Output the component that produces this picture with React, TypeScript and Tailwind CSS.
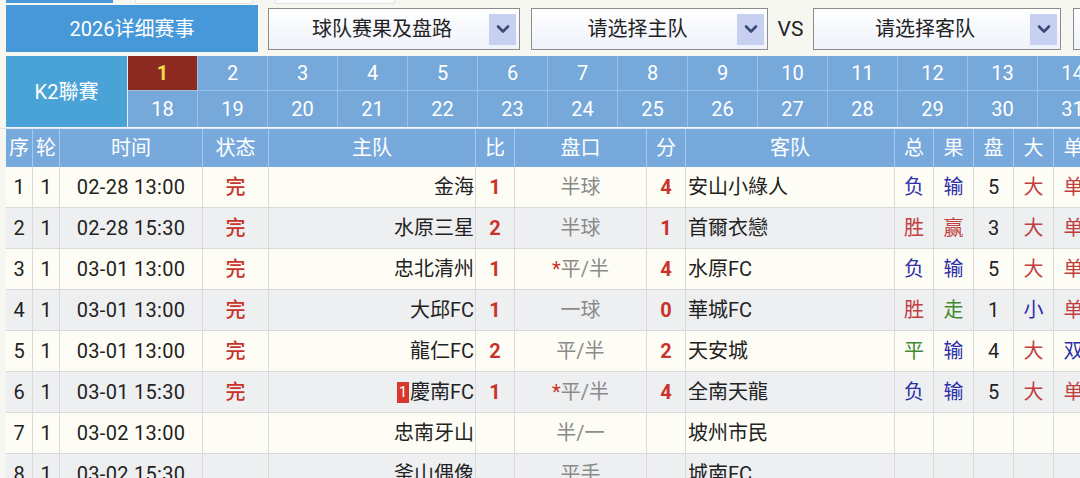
import React from "react";

const FONT = { fontFamily: "Roboto, 'Noto Sans CJK SC', 'Noto Sans', sans-serif" };

function Chevron() {
  return (
    <svg width="14" height="10" viewBox="0 0 14 10">
      <path d="M2 2.5 L7 7.5 L12 2.5" fill="none" stroke="#3a4a78" strokeWidth="2.6" strokeLinecap="round" strokeLinejoin="round" />
    </svg>
  );
}

function Select({ label, w }: { label: string; w: string }) {
  return (
    <div className={`${w} h-[42px] mt-[3px] shrink-0 flex items-center border border-[#8c8c8c] bg-gradient-to-b from-white to-[#eef2fa] pr-[3px]`}>
      <div className="flex-1 text-center text-[20px] text-[#222] pl-[6px]">{label}</div>
      <div className="w-[27px] h-[31px] bg-[#c8d0f2] flex items-center justify-center">
        <Chevron />
      </div>
    </div>
  );
}

type Row = {
  no: string;
  time: string;
  done: boolean;
  home: string;
  badge?: boolean;
  hs?: string;
  pk: string;
  star?: boolean;
  as?: string;
  away: string;
  zong?: [string, string];
  guo?: [string, string];
  pan?: string;
  da?: [string, string];
  dan?: [string, string];
};

const RED = "text-[#c8342a]";
const BLUE = "text-[#2b2fa8]";
const GREEN = "text-[#3f8a32]";
const LRED = "text-[#c04040]";

const rows: Row[] = [
  { no: "1", time: "02-28 13:00", done: true, home: "金海", hs: "1", pk: "半球", as: "4", away: "安山小綠人", zong: ["负", BLUE], guo: ["输", BLUE], pan: "5", da: ["大", LRED], dan: ["单", LRED] },
  { no: "2", time: "02-28 15:30", done: true, home: "水原三星", hs: "2", pk: "半球", as: "1", away: "首爾衣戀", zong: ["胜", LRED], guo: ["赢", LRED], pan: "3", da: ["大", LRED], dan: ["单", LRED] },
  { no: "3", time: "03-01 13:00", done: true, home: "忠北清州", hs: "1", pk: "平/半", star: true, as: "4", away: "水原FC", zong: ["负", BLUE], guo: ["输", BLUE], pan: "5", da: ["大", LRED], dan: ["单", LRED] },
  { no: "4", time: "03-01 13:00", done: true, home: "大邱FC", hs: "1", pk: "一球", as: "0", away: "華城FC", zong: ["胜", LRED], guo: ["走", GREEN], pan: "1", da: ["小", BLUE], dan: ["单", LRED] },
  { no: "5", time: "03-01 13:00", done: true, home: "龍仁FC", hs: "2", pk: "平/半", as: "2", away: "天安城", zong: ["平", GREEN], guo: ["输", BLUE], pan: "4", da: ["大", LRED], dan: ["双", BLUE] },
  { no: "6", time: "03-01 15:30", done: true, home: "慶南FC", badge: true, hs: "1", pk: "平/半", star: true, as: "4", away: "全南天龍", zong: ["负", BLUE], guo: ["输", BLUE], pan: "5", da: ["大", LRED], dan: ["单", LRED] },
  { no: "7", time: "03-02 13:00", done: false, home: "忠南牙山", pk: "半/一", away: "坡州市民" },
  { no: "8", time: "03-02 15:30", done: false, home: "釜山偶像", pk: "平手", away: "城南FC" },
];

const COLS = "grid-cols-[27px_27px_143px_66px_207px_39px_132px_39px_209px_39px_40px_40px_40px_40px]";

export default function App() {
  const top = Array.from({ length: 14 }, (_, i) => i + 1);
  return (
    <div className="w-[1080px] h-[478px] overflow-hidden bg-[#f7f7f2] text-[#222]" style={FONT}>
      {/* scrolled-off strip */}
      <div className="h-[5px] flex">
        <div className="ml-[6px] w-[107px] h-[3px] bg-[#4a98d8]" />
        <div className="ml-[22px] w-[118px] h-[4px] border-b border-x border-[#e2e2e2] bg-[#fbfbfb]" />
        <div className="ml-[22px] w-[120px] h-[4px] border-b border-x border-[#e2e2e2] bg-[#fbfbfb]" />
      </div>
      {/* selector row */}
      <div className="flex h-[51px] pl-[6px] w-[1200px]">
        <div className="w-[252px] h-[47px] shrink-0 bg-[#4698d8] text-white text-[20px] flex items-center justify-center">2026详细赛事</div>
        <div className="w-[10px] shrink-0" />
        <Select label="球队赛果及盘路" w="w-[252px]" />
        <div className="w-[11px] shrink-0" />
        <Select label="请选择主队" w="w-[237px]" />
        <div className="w-[45px] shrink-0 flex items-start justify-center pt-[9px] text-[21px] text-[#222]">VS</div>
        <Select label="请选择客队" w="w-[248px]" />
        <div className="w-[12px] shrink-0" />
        <Select label="" w="w-[100px]" />
      </div>
      {/* round selector */}
      <div className="flex h-[71px] pl-[6px] w-[1200px]">
        <div className="w-[122px] shrink-0 bg-[#4aa3d6] text-white text-[20px] flex items-center justify-center border-r border-[#e8f0f8]">K2聯賽</div>
        <div className="flex flex-col">
          <div className="flex h-[35px]">
            {top.map((n) => (
              <div
                key={n}
                className={`w-[70px] shrink-0 flex items-center justify-center text-[20px] border-r border-b border-[#9dc0e6] ${n === 1 ? "bg-[#8c2a22] text-[#f6dd48] font-bold" : "bg-[#77a8da] text-white"}`}
              >
                {n}
              </div>
            ))}
          </div>
          <div className="flex h-[36px]">
            {top.map((n) => (
              <div key={n} className="w-[70px] shrink-0 flex items-center justify-center text-[20px] border-r border-[#9dc0e6] bg-[#77a8da] text-white">
                {n + 17}
              </div>
            ))}
          </div>
        </div>
      </div>
      {/* table */}
      <div className="pl-[6px] w-[1200px] mt-[1px] border-t border-[#d9e7f4]">
        <div className={`grid ${COLS} h-[38px] bg-[#78a9dc] text-white text-[20px]`}>
          {["序", "轮", "时间", "状态", "主队", "比", "盘口", "分", "客队", "总", "果", "盘", "大", "单"].map((h, i) => (
            <div key={i} className="flex items-center justify-center border-r border-[#a9c8ea]">{h}</div>
          ))}
        </div>
        {rows.map((r, idx) => (
          <div
            key={r.no}
            className={`grid ${COLS} h-[41px] text-[20px] border-b border-[#dadada] ${idx % 2 === 0 ? "bg-[#fefdf5]" : "bg-[#eeeff1]"}`}
          >
            <div className="flex items-center justify-center border-r border-[#dadada]">{r.no}</div>
            <div className="flex items-center justify-center border-r border-[#dadada]">1</div>
            <div className="flex items-center justify-center border-r border-[#dadada] tracking-[0.3px]">{r.time}</div>
            <div className={`flex items-center justify-center border-r border-[#dadada] font-medium ${RED}`}>{r.done ? "完" : ""}</div>
            <div className="flex items-center justify-end pr-[1px] border-r border-[#dadada]">
              {r.badge && (
                <span className="mr-[1px] w-[12px] h-[21px] bg-[#d8372b] text-white text-[15px] leading-[21px] flex items-center justify-center">1</span>
              )}
              {r.home}
            </div>
            <div className={`flex items-center justify-center border-r border-[#dadada] font-bold ${RED}`}>{r.hs ?? ""}</div>
            <div className="flex items-center justify-center border-r border-[#dadada] text-[#8a8a8a]">
              {r.star && <span className="text-[#c8342a]">*</span>}
              {r.pk}
            </div>
            <div className={`flex items-center justify-center border-r border-[#dadada] font-bold ${RED}`}>{r.as ?? ""}</div>
            <div className="flex items-center justify-start pl-[2px] border-r border-[#dadada]">{r.away}</div>
            <div className={`flex items-center justify-center border-r border-[#dadada] ${r.zong ? r.zong[1] : ""}`}>{r.zong ? r.zong[0] : ""}</div>
            <div className={`flex items-center justify-center border-r border-[#dadada] ${r.guo ? r.guo[1] : ""}`}>{r.guo ? r.guo[0] : ""}</div>
            <div className="flex items-center justify-center border-r border-[#dadada]">{r.pan ?? ""}</div>
            <div className={`flex items-center justify-center border-r border-[#dadada] ${r.da ? r.da[1] : ""}`}>{r.da ? r.da[0] : ""}</div>
            <div className={`flex items-center justify-center border-r border-[#dadada] ${r.dan ? r.dan[1] : ""}`}>{r.dan ? r.dan[0] : ""}</div>
          </div>
        ))}
      </div>
    </div>
  );
}
